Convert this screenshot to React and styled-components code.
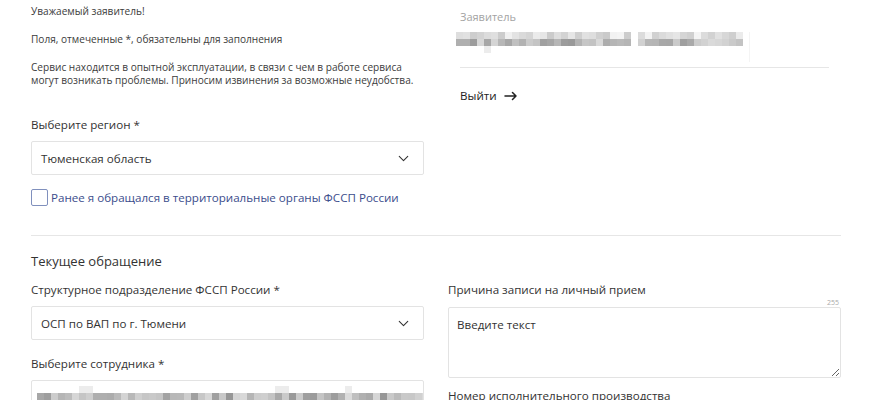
import React from "react";
import styled, { createGlobalStyle } from "styled-components";
import { ChevronDown } from "lucide-react";

const Global = createGlobalStyle`
  html, body { margin: 0; padding: 0; background: #fff; }
  body { font-family: "Open Sans", "Noto Sans", sans-serif; color: #333; }
  * { box-sizing: border-box; }
`;

const Page = styled.div`
  padding: 5px 29px 0 31px;
  width: 870px;
  height: 400px;
  overflow: hidden;
`;

const Columns = styled.div`
  display: grid;
  grid-template-columns: 393px 393px;
  column-gap: 24px;
  align-items: start;
`;

const Col = styled.div`
  display: flex;
  flex-direction: column;
`;

const Note = styled.p`
  margin: 0 0 ${(p) => p.$after ?? 15}px;
  font-size: 10.1px;
  line-height: 13px;
  color: #3c3c3c;
  white-space: nowrap;
`;

const Label = styled.div`
  font-size: 11.6px;
  line-height: 16px;
  color: #333;
  white-space: nowrap;
  margin-top: ${(p) => p.$top ?? 0}px;
  margin-bottom: ${(p) => p.$bottom ?? 8}px;
`;

const SelectBox = styled.div`
  height: 34px;
  border: 1px solid #e3e3e3;
  border-radius: 2px;
  display: flex;
  align-items: center;
  justify-content: space-between;
  padding: 0 11px 0 9px;
  font-size: 11.6px;
  color: #333;
  overflow: hidden;
`;

const CheckRow = styled.label`
  display: flex;
  align-items: center;
  gap: 3px;
  margin-top: 14px;
  font-size: 11.6px;
  color: #3b4d8c;
`;

const Box = styled.span`
  width: 17px;
  height: 17px;
  border: 1.5px solid #8090bd;
  border-radius: 2px;
  display: inline-block;
`;

const Divider = styled.hr`
  border: 0;
  border-top: 1px solid #e6e6e6;
  margin: ${(p) => p.$m || "0"};
`;

const Heading = styled.div`
  font-size: 13px;
  line-height: 18px;
  color: #333;
  margin-bottom: 12px;
`;

const Card = styled.div`
  padding: 5px 12px 0;
`;

const CardLabel = styled.div`
  font-size: 11px;
  line-height: 14px;
  color: #a3a3a3;
  margin-bottom: 8px;
`;

const NameRow = styled.div`
  margin-left: -4px;
  width: 294px;
  height: 30px;
  border-right: 1px solid #f4f4f4;
  margin-bottom: 5px;
`;

const Mosaic = styled.div`
  display: grid;
  grid-template-columns: repeat(${(p) => p.$cols}, 7px);
  grid-auto-rows: 7px;
`;

const Cell = styled.span`
  background: ${(p) => p.$c};
`;

const Logout = styled.div`
  display: flex;
  align-items: center;
  gap: 7px;
  margin-top: 20px;
  font-size: 11.6px;
  line-height: 16px;
  color: #222;
`;

const Counter = styled.div`
  font-size: 7px;
  line-height: 9px;
  text-align: right;
  color: #aaa;
  padding-right: 2px;
`;

const TextArea = styled.textarea`
  height: 71px;
  border: 1px solid #e3e3e3;
  border-radius: 2px;
  padding: 9px 8px;
  font-family: "Open Sans", "Noto Sans", sans-serif;
  font-size: 11.6px;
  resize: vertical;
  outline: none;
  &::placeholder { color: #333; }
`;

const SelectMosaicWrap = styled.div`
  align-self: flex-start;
  padding-top: 5px;
  margin-left: -4px;
`;

function rnd(seed) {
  let s = seed;
  return () => {
    s = (s * 9301 + 49297) % 233280;
    return s / 233280;
  };
}

function buildCells(cols, rows, seed, gapCols, base, spread, sparseRows) {
  const r = rnd(seed);
  const cells = [];
  for (let y = 0; y < rows; y++) {
    for (let x = 0; x < cols; x++) {
      let c = "#ffffff";
      if (!gapCols.includes(x)) {
        const v = Math.round(base[y] + r() * spread[y]);
        c = `rgb(${v},${v},${v})`;
        if (sparseRows[y]) {
          c = sparseRows[y].includes(x) ? "#ececec" : "#ffffff";
        }
      }
      cells.push(c);
    }
  }
  return cells;
}

const nameCells = buildCells(41, 3, 7, [25], [200, 150, 255], [45, 70, 0], [null, null, [4]]);
const staffCells = buildCells(56, 2, 13, [], [255, 150], [0, 70], [[6, 7, 34, 35, 44], null]);

const ArrowIcon = () => (
  <svg width="14" height="10" viewBox="0 0 14 10" fill="none">
    <path d="M1 5h11M8.5 1.5L12 5l-3.5 3.5" stroke="#222" strokeWidth="1.5" strokeLinecap="round" strokeLinejoin="round" />
  </svg>
);

export default function App() {
  return (
    <Page>
      <Global />
      <Columns>
        <Col>
          <Note>Уважаемый заявитель!</Note>
          <Note>Поля, отмеченные *, обязательны для заполнения</Note>
          <Note $after={30}>
            Сервис находится в опытной эксплуатации, в связи с чем в работе сервиса
            <br />
            могут возникать проблемы. Приносим извинения за возможные неудобства.
          </Note>
          <Label>Выберите регион *</Label>
          <SelectBox>
            <span>Тюменская область</span>
            <ChevronDown size={17} strokeWidth={1.5} color="#333" />
          </SelectBox>
          <CheckRow>
            <Box />
            <span>Ранее я обращался в территориальные органы ФССП России</span>
          </CheckRow>
        </Col>
        <Card>
          <CardLabel>Заявитель</CardLabel>
          <NameRow>
            <Mosaic $cols={41}>
              {nameCells.map((c, i) => (
                <Cell key={i} $c={c} />
              ))}
            </Mosaic>
          </NameRow>
          <Divider />
          <Logout>
            <span>Выйти</span>
            <ArrowIcon />
          </Logout>
        </Card>
      </Columns>
      <Divider $m="29px 0 16px" />
      <Heading>Текущее обращение</Heading>
      <Columns>
        <Col>
          <Label>Структурное подразделение ФССП России *</Label>
          <SelectBox>
            <span>ОСП по ВАП по г. Тюмени</span>
            <ChevronDown size={17} strokeWidth={1.5} color="#333" />
          </SelectBox>
          <Label $top={16}>Выберите сотрудника *</Label>
          <SelectBox>
            <SelectMosaicWrap>
              <Mosaic $cols={56}>
                {staffCells.map((c, i) => (
                  <Cell key={i} $c={c} />
                ))}
              </Mosaic>
            </SelectMosaicWrap>
          </SelectBox>
        </Col>
        <Col>
          <Label $bottom={0}>Причина записи на личный прием</Label>
          <Counter>255</Counter>
          <TextArea placeholder="Введите текст" />
          <Label $top={10}>Номер исполнительного производства</Label>
        </Col>
      </Columns>
    </Page>
  );
}
